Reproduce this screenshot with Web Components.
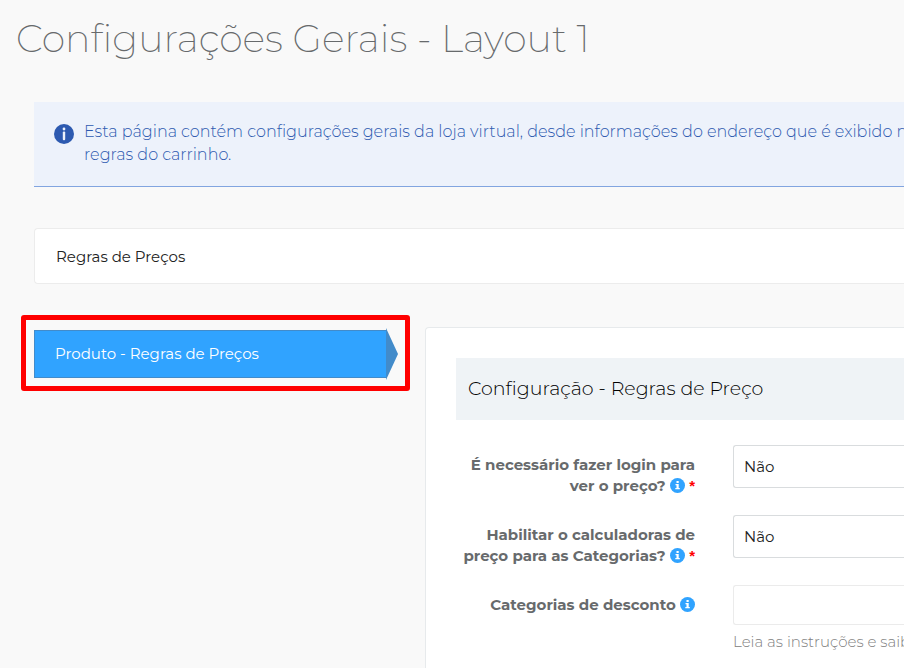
<!DOCTYPE html>
<html lang="pt-BR">
<head>
<meta charset="utf-8">
<meta name="viewport" content="width=device-width, initial-scale=1">
<title>Configurações Gerais</title>
<style>
  body {
    margin: 0;
    overflow: hidden;
    background: #f9f9f9;
    color: #676a6c;
    font-family: Montserrat, Inter, sans-serif;
    font-size: 15px;
  }
</style>
</head>
<body>
<settings-page heading="Configurações Gerais - Layout 1">
  <info-alert slot="alert">Esta página contém configurações gerais da loja virtual, desde informações do endereço que é exibido n<br>regras do carrinho.</info-alert>
  <group-title slot="group">Regras de Preços</group-title>
  <side-tab slot="nav" href="#regras">Produto - Regras de Preços</side-tab>
  <config-panel id="regras" heading="Configuração - Regras de Preço">
    <config-field type="select" value="Não" required>É necessário fazer login para ver o preço?</config-field>
    <config-field type="select" value="Não" required>Habilitar o calculadoras de preço para as Categorias?</config-field>
    <config-field type="text" help="Leia as instruções e saib">Categorias de desconto</config-field>
  </config-panel>
</settings-page>

<script>
class BaseElement extends HTMLElement {
  constructor() {
    super();
    this.attachShadow({ mode: "open" });
  }
  connectedCallback() {
    const template = document.createElement("template");
    template.innerHTML = this.render();
    this.shadowRoot.replaceChildren(template.content.cloneNode(true));
  }
}

class SettingsPage extends BaseElement {
  render() {
    return `
      <style>
        :host { display: block; }
        h1 {
          margin: 0;
          padding: 15px 16px 39px;
          font-size: 38px;
          font-weight: 200;
          line-height: 48px;
          white-space: nowrap;
        }
        .top {
          display: flex;
          flex-direction: column;
          gap: 41px;
          margin-left: 34px;
        }
        .columns {
          display: flex;
          align-items: flex-start;
          gap: 15px;
          margin: 31px 0 0 21px;
        }
        nav { flex: 0 0 389px; }
        main { flex: 1; min-width: 0; padding-top: 12px; }
      </style>
      <h1>${this.getAttribute("heading")}</h1>
      <div class="top">
        <slot name="alert"></slot>
        <slot name="group"></slot>
      </div>
      <div class="columns">
        <nav><slot name="nav"></slot></nav>
        <main><slot></slot></main>
      </div>
    `;
  }
}

class InfoAlert extends BaseElement {
  render() {
    return `
      <style>
        :host {
          display: flex;
          gap: 10px;
          padding: 18px 0 20px 20px;
          background: #edf2fb;
          border-bottom: 1px solid #82a5e0;
          color: #2d5ab0;
          font-size: 16px;
          font-weight: 300;
          line-height: 23px;
        }
        svg { flex: none; margin-top: 4px; }
        p { margin: 0; white-space: nowrap; }
      </style>
      <svg width="20" height="20" viewBox="0 0 20 20" aria-hidden="true">
        <circle cx="10" cy="10" r="10" fill="#2d5ab0"/>
        <circle cx="10" cy="5" r="1.4" fill="#edf2fb"/>
        <rect x="8.8" y="7.6" width="2.4" height="8.6" rx="1" fill="#edf2fb"/>
      </svg>
      <p><slot></slot></p>
    `;
  }
}

class GroupTitle extends BaseElement {
  render() {
    return `
      <style>
        :host {
          display: block;
          padding: 17px 21px 15px;
          background: #fff;
          border: 1px solid #ececec;
          border-right: 0;
          border-radius: 4px 0 0 4px;
          color: #222;
        }
        h2 { margin: 0; font-size: 15px; font-weight: 400; line-height: 22px; }
      </style>
      <h2><slot></slot></h2>
    `;
  }
}

class SideTab extends BaseElement {
  render() {
    return `
      <style>
        :host {
          display: block;
          padding: 10px 7px 8px 8px;
          border: 5px solid #f00;
          border-radius: 3px;
        }
        a {
          display: flex;
          align-items: center;
          color: #fff;
          text-decoration: none;
          line-height: 22px;
        }
        span {
          flex: 1;
          padding: 12px 20px;
          background: #30a3ff;
          border: 1px solid #428bca;
          border-right: 0;
        }
        svg { flex: none; margin: -2px 0; }
      </style>
      <a href="${this.getAttribute("href")}">
        <span><slot></slot></span>
        <svg width="12" height="52" viewBox="0 0 12 52" aria-hidden="true">
          <path d="M0 0L12 26L0 52Z" fill="#428bca"/>
        </svg>
      </a>
    `;
  }
}

class ConfigPanel extends BaseElement {
  render() {
    return `
      <style>
        :host {
          display: block;
          padding: 30px 0 30px 30px;
          background: #fff;
          border: 1px solid #e7eaec;
          border-right: 0;
          border-radius: 4px 0 0 0;
        }
        h2 {
          margin: 0 0 25px;
          padding: 18px 12px;
          background: #eff3f6;
          color: #000;
          font-size: 19px;
          font-weight: 300;
          line-height: 26px;
        }
        .fields { display: flex; flex-direction: column; gap: 19px; }
      </style>
      <h2>${this.getAttribute("heading")}</h2>
      <div class="fields"><slot></slot></div>
    `;
  }
}

class ConfigField extends BaseElement {
  render() {
    const value = this.getAttribute("value") || "";
    const help = this.getAttribute("help");
    const control = this.getAttribute("type") === "select"
      ? `<select id="control"><option>${value}</option></select>`
      : `<input id="control" type="text" value="${value}">`;
    return `
      <style>
        :host { display: flex; gap: 38px; align-items: flex-start; }
        label {
          flex: 0 0 239px;
          padding-top: 9px;
          font-weight: 700;
          line-height: 21px;
          text-align: right;
        }
        svg { display: inline-block; height: 15px; vertical-align: -2px; }
        b {
          color: #f00;
          font-family: "Liberation Sans", sans-serif;
          line-height: 1;
        }
        .control { flex: 1; min-width: 0; }
        select, input {
          display: block;
          box-sizing: border-box;
          width: 100%;
          margin: 0;
          padding: 0 10px;
          appearance: none;
          background: #fff;
          border: 1px solid #d9dcde;
          border-right: 0;
          border-radius: 3px 0 0 3px;
          color: #222;
          font: inherit;
        }
        select { height: 43px; }
        input { height: 40px; border-color: #ebebeb; }
        small {
          display: block;
          margin-top: 6px;
          overflow: hidden;
          color: #808080;
          font-size: 15px;
          font-weight: 300;
          line-height: 22px;
          white-space: nowrap;
        }
      </style>
      <label for="control"><slot></slot>
        <svg width="15" height="15" viewBox="0 0 15 15" aria-hidden="true">
          <circle cx="7.5" cy="7.5" r="7.5" fill="#30a3ff"/>
          <path d="M6.5 3H8.7V5H6.5ZM5.5 6H8.7V10H9.8V11.3H5.3V10H6.5V7.3H5.5Z" fill="#fff"/>
        </svg>
        ${this.hasAttribute("required") ? "<b>*</b>" : ""}</label>
      <div class="control">
        ${control}
        ${help ? `<small>${help}</small>` : ""}
      </div>
    `;
  }
}

customElements.define("settings-page", SettingsPage);
customElements.define("info-alert", InfoAlert);
customElements.define("group-title", GroupTitle);
customElements.define("side-tab", SideTab);
customElements.define("config-panel", ConfigPanel);
customElements.define("config-field", ConfigField);
</script>
</body>
</html>
